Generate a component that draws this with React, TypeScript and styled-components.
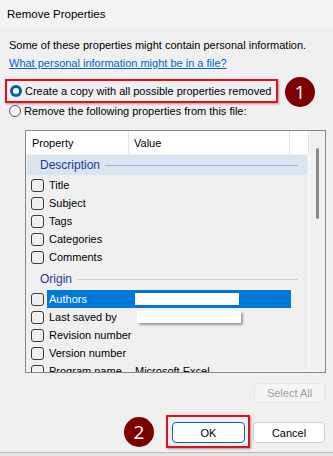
import React from "react";
import styled, { createGlobalStyle } from "styled-components";

const FONT = `"Liberation Sans", Arial, sans-serif`;

const Global = createGlobalStyle`
  html, body { margin: 0; padding: 0; background: #f0f0f0; }
  body { font-family: ${FONT}; font-size: 11px; color: #000; }
`;

const Window = styled.div`
  width: 333px;
  height: 456px;
  display: flex;
  flex-direction: column;
  background: #f0f0f0;
  overflow: hidden;
`;

const TitleBar = styled.div`
  height: 27px;
  flex: none;
  display: flex;
  align-items: center;
  padding-left: 7px;
  background: #f3f3f3;
  font-size: 11.5px;
`;

const Content = styled.div`
  flex: 1;
  display: flex;
  flex-direction: column;
  padding: 9px 8px 0 9px;
`;

const Line = styled.div`
  height: 18px;
  line-height: 18px;
  white-space: nowrap;
`;

const Link = styled.a`
  color: #0066cc;
  text-decoration: underline;
  cursor: pointer;
`;

const RadioRow = styled.div<{ $top: number }>`
  position: relative;
  height: 18px;
  margin-top: ${(p) => p.$top}px;
  display: flex;
  align-items: center;
  gap: 3px;
  white-space: nowrap;
`;

const RadioIcon = styled.svg<{ $shift: number }>`
  flex: none;
  width: 12px;
  height: 12px;
  margin-left: ${(p) => p.$shift}px;
`;

const Highlight = styled.div<{ $l: number; $t: number; $r: number; $b: number }>`
  position: absolute;
  left: ${(p) => p.$l}px;
  top: ${(p) => p.$t}px;
  right: ${(p) => p.$r}px;
  bottom: ${(p) => p.$b}px;
  border: 2px solid #e3101b;
  box-shadow: 1px 1px 2px rgba(0, 0, 0, 0.35);
  pointer-events: none;
`;

const Badge = styled.div<{ $l: number; $t: number }>`
  position: absolute;
  left: ${(p) => p.$l}px;
  top: ${(p) => p.$t}px;
  width: 30px;
  height: 30px;
  border-radius: 50%;
  background: #7d0000;
  color: #fff;
  font-family: "Open Sans", sans-serif;
  font-size: 19px;
  display: flex;
  align-items: center;
  justify-content: center;
`;

const ListBox = styled.div`
  margin-top: 10px;
  margin-left: 16px;
  width: 301px;
  height: 243px;
  box-sizing: border-box;
  border: 1px solid #828790;
  display: grid;
  grid-template-columns: 283px 16px;
  overflow: hidden;
`;

const ListMain = styled.div`
  display: flex;
  flex-direction: column;
  overflow: hidden;
`;

const Header = styled.div`
  height: 23px;
  flex: none;
  background: #fff;
  display: grid;
  grid-template-columns: 103px 161px 1fr;
`;

const HeaderCell = styled.div<{ $pad: number }>`
  display: flex;
  align-items: center;
  padding-left: ${(p) => p.$pad}px;
  border-right: 1px solid #e5e5e5;
`;

const Rows = styled.div`
  padding-top: 1px;
  display: flex;
  flex-direction: column;
`;

const GroupRow = styled.div<{ $active?: boolean; $top: number }>`
  height: 20px;
  flex: none;
  margin: ${(p) => p.$top}px 2px 1px 1px;
  padding-left: 13px;
  display: flex;
  align-items: center;
  background: ${(p) => (p.$active ? "#d9e5f1" : "transparent")};
  color: #1f3a93;
  font-size: 12px;
`;

const GroupLine = styled.div<{ $active?: boolean }>`
  flex: 1;
  height: 1px;
  margin: 0 9px 0 5px;
  background: ${(p) => (p.$active ? "#9db0d8" : "#c7d0e2")};
`;

const ItemRow = styled.div`
  height: 18px;
  flex: none;
  display: grid;
  grid-template-columns: 21px 82px 162px;
`;

const CheckCell = styled.div`
  display: flex;
  align-items: center;
  padding-left: 5px;
`;

const CheckBox = styled.div`
  width: 13px;
  height: 13px;
  box-sizing: border-box;
  border: 1px solid #3a3a3a;
  border-radius: 3px;
`;

const Cell = styled.div<{ $sel?: boolean; $pad: number }>`
  display: flex;
  align-items: center;
  padding-left: ${(p) => p.$pad}px;
  white-space: nowrap;
  background: ${(p) => (p.$sel ? "#0078d7" : "transparent")};
  color: ${(p) => (p.$sel ? "#fff" : "#000")};
`;

const Redact = styled.div<{ $shadow?: boolean }>`
  width: 104px;
  height: 12px;
  background: #fff;
  box-shadow: ${(p) =>
    p.$shadow ? "2px 2px 2px rgba(0,0,0,0.35)" : "0 0 1px rgba(0,0,0,0.25)"};
`;

const Scroll = styled.div`
  border-left: 1px solid #fbfbfb;
  background: #f0f0f0;
`;

const Thumb = styled.div`
  width: 3px;
  height: 71px;
  margin: 17px 0 0 6px;
  border-radius: 2px;
  background: #8a8a8a;
`;

const ButtonRow = styled.div<{ $top: number }>`
  margin-top: ${(p) => p.$top}px;
  display: flex;
  justify-content: flex-end;
  gap: 8px;
`;

const Button = styled.div<{ $w: number; $h: number; $variant?: "default" | "disabled" }>`
  position: relative;
  width: ${(p) => p.$w}px;
  height: ${(p) => p.$h}px;
  box-sizing: border-box;
  border-radius: 4px;
  display: flex;
  align-items: center;
  justify-content: center;
  background: ${(p) => (p.$variant === "disabled" ? "#f5f5f5" : "#fff")};
  border: 1px solid
    ${(p) =>
      p.$variant === "default" ? "#0067c0" : p.$variant === "disabled" ? "#e6e6e6" : "#d0d0d0"};
  color: ${(p) => (p.$variant === "disabled" ? "#a0a0a0" : "#000")};
`;

const Edge = styled.div`
  height: 3px;
  flex: none;
  border-top: 1px solid #b9b9b9;
  background: #e4e4e4;
`;

const RadioChecked = () => (
  <RadioIcon $shift={1} viewBox="0 0 12 12">
    <circle cx="6" cy="6" r="6" fill="#005fb8" />
    <circle cx="6" cy="6" r="3" fill="#fff" />
  </RadioIcon>
);

const RadioEmpty = () => (
  <RadioIcon $shift={0} viewBox="0 0 12 12">
    <circle cx="6" cy="6" r="5.5" fill="#f7f7f7" stroke="#5a5a5a" strokeWidth="1" />
  </RadioIcon>
);

type Item = { label: string; value?: string; sel?: boolean; redact?: "plain" | "shadow" };

const description: Item[] = [
  { label: "Title" },
  { label: "Subject" },
  { label: "Tags" },
  { label: "Categories" },
  { label: "Comments" },
];

const origin: Item[] = [
  { label: "Authors", sel: true, redact: "plain" },
  { label: "Last saved by", redact: "shadow" },
  { label: "Revision number" },
  { label: "Version number" },
  { label: "Program name", value: "Microsoft Excel" },
];

const Row = ({ item }: { item: Item }) => (
  <ItemRow>
    <CheckCell>
      <CheckBox />
    </CheckCell>
    <Cell $sel={item.sel} $pad={2}>
      {item.label}
    </Cell>
    <Cell $sel={item.sel} $pad={item.redact === "shadow" ? 8 : 6}>
      {item.redact ? <Redact $shadow={item.redact === "shadow"} /> : item.value}
    </Cell>
  </ItemRow>
);

export default function App() {
  return (
    <>
      <Global />
      <Window>
        <TitleBar>Remove Properties</TitleBar>
        <Content>
          <Line>Some of these properties might contain personal information.</Line>
          <Line>
            <Link>What personal information might be in a file?</Link>
          </Line>
          <RadioRow $top={10}>
            <RadioChecked />
            <span>Create a copy with all possible properties removed</span>
            <Highlight $l={-4} $t={-3} $r={47} $b={-3} />
            <Badge $l={276} $t={-5}>1</Badge>
          </RadioRow>
          <RadioRow $top={2}>
            <RadioEmpty />
            <span>Remove the following properties from this file:</span>
          </RadioRow>
          <ListBox>
            <ListMain>
              <Header>
                <HeaderCell $pad={6}>Property</HeaderCell>
                <HeaderCell $pad={5}>Value</HeaderCell>
                <HeaderCell $pad={0} />
              </Header>
              <Rows>
                <GroupRow $active $top={0}>
                  Description
                  <GroupLine $active />
                </GroupRow>
                {description.map((it) => (
                  <Row key={it.label} item={it} />
                ))}
                <GroupRow $top={3}>
                  Origin
                  <GroupLine />
                </GroupRow>
                {origin.map((it) => (
                  <Row key={it.label} item={it} />
                ))}
              </Rows>
            </ListMain>
            <Scroll>
              <Thumb />
            </Scroll>
          </ListBox>
          <ButtonRow $top={10}>
            <Button $w={71} $h={20} $variant="disabled">
              Select All
            </Button>
          </ButtonRow>
          <ButtonRow $top={19}>
            <Button $w={73} $h={21} $variant="default">
              OK
              <Highlight $l={-7} $t={-8} $r={-6} $b={-6} />
              <Badge $l={-49} $t={-6}>2</Badge>
            </Button>
            <Button $w={72} $h={21}>
              Cancel
            </Button>
          </ButtonRow>
        </Content>
        <Edge />
      </Window>
    </>
  );
}
